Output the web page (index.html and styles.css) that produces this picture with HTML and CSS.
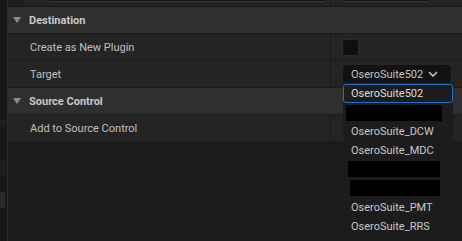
FILE: index.html
```html
<!DOCTYPE html>
<html lang="en">
<head>
    <meta charset="UTF-8">
    <meta name="viewport" content="width=device-width, initial-scale=1.0">
    <title>Details</title>
    <link rel="stylesheet" href="styles.css">
</head>
<body>
    <div class="app">
        <div class="rail">
            <span class="patch p1"></span>
            <span class="patch p2"></span>
            <span class="patch p3"></span>
        </div>
        <div class="panel">
            <div class="row row-top">
                <div class="indent"></div>
                <div class="name"><span class="field field-wide"></span></div>
                <div class="value"><span class="field field-small"></span></div>
            </div>
            <div class="cat"><span class="arrow"></span>Destination</div>
            <div class="row">
                <div class="name">Create as New Plugin</div>
                <div class="value"><span class="check"></span></div>
            </div>
            <div class="row">
                <div class="name">Target</div>
                <div class="value">
                    <div class="combo">
                        <span>OseroSuite502</span>
                        <svg width="10" height="6" viewBox="0 0 10 6"><polyline points="1,1 5,5 9,1" fill="none" stroke="#c4c4c4" stroke-width="1.6"/></svg>
                    </div>
                </div>
            </div>
            <div class="cat"><span class="arrow"></span>Source Control</div>
            <div class="row">
                <div class="name">Add to Source Control</div>
                <div class="value"></div>
            </div>

            <ul class="menu">
                <li class="item selected">OseroSuite502</li>
                <li class="item"><span class="redact r1"></span></li>
                <li class="item">OseroSuite_DCW</li>
                <li class="item">OseroSuite_MDC</li>
                <li class="item"><span class="redact r2"></span></li>
                <li class="item"><span class="redact r3"></span></li>
                <li class="item">OseroSuite_PMT</li>
                <li class="item">OseroSuite_RRS</li>
            </ul>
        </div>
    </div>
</body>
</html>
```

FILE: styles.css
```css
*{box-sizing:border-box;margin:0;padding:0;}
html,body{height:100%;}
body{background:#1b1b1b;font-family:Roboto,'Liberation Sans',sans-serif;font-size:11px;color:#c0c0c0;overflow:hidden;}

.app{display:flex;height:241px;}
.rail{width:8px;flex:none;background:#161616;border-right:1px solid #2e2e2e;display:flex;flex-direction:column;}
.patch{display:block;width:6px;}
.p1{height:7px;margin-top:120px;background:#1e1e1e;}
.p2{height:16px;margin-top:33px;background:#1e1e1e;}
.p3{height:16px;margin-top:16px;background:#2a2a2a;width:5px;}

.panel{position:relative;flex:1;}

.row{display:flex;height:27px;background:#242424;border-bottom:1px solid #1a1a1a;}
.row .name{width:323px;flex:none;display:flex;align-items:center;padding-left:22px;border-right:1px solid #1a1a1a;}
.row .value{flex:1;display:flex;align-items:center;padding-left:11px;}

.row-top{height:7px;}
.row-top .indent{width:15px;flex:none;background:#1d1d1d;border-right:1px solid #1a1a1a;}
.row-top .name{width:308px;padding-left:25px;align-items:flex-start;}
.row-top .value{align-items:flex-start;}
.field{display:block;height:2px;background:#121212;border:1px solid #383838;border-top:none;border-radius:0 0 3px 3px;}
.field-wide{width:278px;}
.field-small{width:87px;}

.cat{display:flex;align-items:center;height:27px;padding-left:5px;background:#2f2f2f;border-bottom:1px solid #1a1a1a;font-weight:bold;color:#c8c8c8;}
.arrow{width:0;height:0;margin-right:8px;border-left:4.5px solid transparent;border-right:4.5px solid transparent;border-top:6px solid #8c8c8c;}

.check{display:block;width:17px;height:17px;background:#0f0f0f;border:1px solid #2b2b2b;border-radius:3px;}

.combo{display:flex;align-items:center;justify-content:space-between;width:110px;height:20px;padding:0 13px 0 8px;background:#121212;border:1px solid #262626;border-radius:4px;color:#c4c4c4;}

.menu{position:absolute;left:335px;top:84px;width:110px;height:160px;list-style:none;background:#1c1c1c;}
.item{position:relative;height:19px;line-height:19px;padding-left:8px;color:#c8c8c8;}
.item.selected{border:1px solid #2470c8;border-radius:3px;padding-left:7px;line-height:17px;color:#dcdcdc;}
.redact{position:absolute;top:1px;height:16px;background:#000;}
.r1{left:3px;width:96px;top:2px;}
.r2{left:5px;width:92px;}
.r3{left:7px;width:90px;}
```
